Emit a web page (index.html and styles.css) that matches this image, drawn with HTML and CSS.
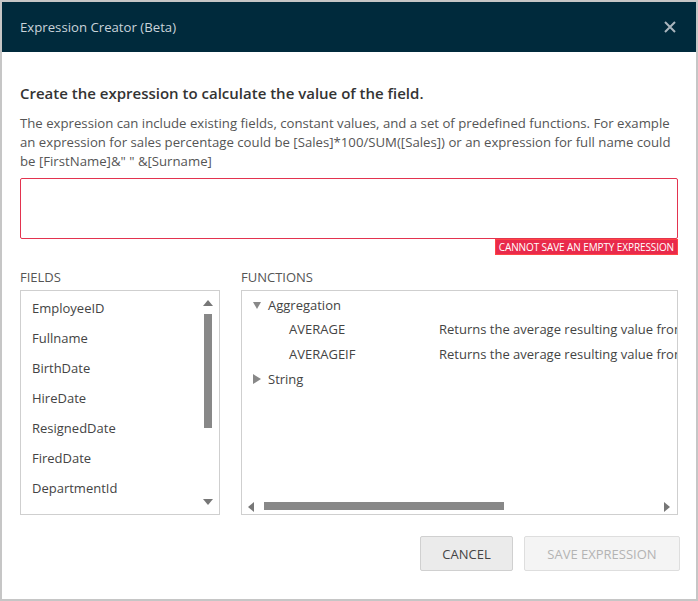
FILE: index.html
```html
<!DOCTYPE html>
<html>
<head>
<meta charset="utf-8">
<link rel="stylesheet" href="styles.css">
</head>
<body>
<div class="dialog">
  <div class="header">
    <span class="title">Expression Creator (Beta)</span>
    <svg class="close" width="12" height="12" viewBox="0 0 12 12"><path d="M1 1L11 11M11 1L1 11" stroke="#a9b5bd" stroke-width="2"/></svg>
  </div>
  <div class="body">
    <h2 class="heading">Create the expression to calculate the value of the field.</h2>
    <p class="desc">The expression can include existing fields, constant values, and a set of predefined functions. For example an expression for sales percentage could be [Sales]*100/SUM([Sales]) or an expression for full name could be [FirstName]&amp;" " &amp;[Surname]</p>
    <div class="expr-wrap">
      <div class="expr"></div>
      <div class="error-row"><span class="error">CANNOT SAVE AN EMPTY EXPRESSION</span></div>
    </div>
    <div class="panels">
      <div class="fields-col">
        <div class="label">FIELDS</div>
        <div class="box fields-box">
          <ul class="field-list">
            <li>EmployeeID</li>
            <li>Fullname</li>
            <li>BirthDate</li>
            <li>HireDate</li>
            <li>ResignedDate</li>
            <li>FiredDate</li>
            <li>DepartmentId</li>
            <li>DepartmentName</li>
          </ul>
          <div class="vscroll">
            <span class="arr up"></span>
            <span class="vtrack"><span class="vthumb"></span></span>
            <span class="arr down"></span>
          </div>
        </div>
      </div>
      <div class="func-col">
        <div class="label">FUNCTIONS</div>
        <div class="box func-box">
          <div class="tree">
            <div class="node"><span class="tri open"></span>Aggregation</div>
            <div class="fn"><span class="fn-name">AVERAGE</span><span class="fn-desc">Returns the average resulting value from the expression</span></div>
            <div class="fn"><span class="fn-name">AVERAGEIF</span><span class="fn-desc">Returns the average resulting value from the expression</span></div>
            <div class="node"><span class="tri closed"></span>String</div>
          </div>
          <div class="hscroll">
            <span class="arr left"></span>
            <span class="htrack"><span class="hthumb"></span></span>
            <span class="arr right"></span>
          </div>
        </div>
      </div>
    </div>
    <div class="actions">
      <button class="btn cancel">CANCEL</button>
      <button class="btn save" disabled>SAVE EXPRESSION</button>
    </div>
  </div>
</div>
</body>
</html>
```

FILE: styles.css
```css
* { box-sizing: border-box; }
html, body { margin: 0; padding: 0; }
body {
  font-family: "Open Sans", "Noto Sans", sans-serif;
  background: #fff;
}
.dialog {
  width: 698px;
  height: 601px;
  border: 2px solid #c6c6c6;
  display: flex;
  flex-direction: column;
  background: #fff;
  overflow: hidden;
}
.header {
  height: 50px;
  background: #002a3c;
  display: flex;
  align-items: center;
  justify-content: space-between;
  padding: 0 20px 0 18px;
  flex: none;
}
.title {
  color: #c9d3da;
  font-size: 13.2px;
}
.close { display: block; }
.body {
  padding: 30px 18px 0 18px;
  display: flex;
  flex-direction: column;
  flex: 1;
  min-width: 0;
}
.heading {
  margin: 0;
  font-size: 15px;
  font-weight: 600;
  color: #333;
  line-height: 22px;
}
.desc {
  margin: 10px 0 0 0;
  font-size: 13.2px;
  line-height: 19px;
  color: #555;
}
.expr-wrap { margin-top: 7px; }
.expr {
  height: 61px;
  border: 1px solid #e3334f;
  border-radius: 2px;
}
.error-row { display: flex; justify-content: flex-end; }
.error {
  background: #e92a4b;
  color: #fff;
  font-size: 10px;
  line-height: 14px;
  padding: 0 3px;
  border: 1px solid #f44;
  letter-spacing: -0.1px;
}
.panels {
  display: flex;
  gap: 21px;
  margin-top: 13px;
  min-width: 0;
}
.label {
  font-size: 13px;
  color: #555;
  line-height: 18px;
  margin-bottom: 4px;
}
.fields-col { width: 200px; flex: none; }
.func-col { flex: 1; min-width: 0; }
.box {
  border: 1px solid #cfcfcf;
  height: 225px;
  position: relative;
  overflow: hidden;
}
.field-list {
  list-style: none;
  margin: 0;
  padding: 2px 0 0 11px;
}
.field-list li {
  font-size: 13px;
  line-height: 30px;
  color: #444;
}
.vscroll {
  position: absolute;
  top: 5px;
  right: 7px;
  bottom: 5px;
  width: 9px;
  display: flex;
  flex-direction: column;
  align-items: center;
}
.vtrack { flex: 1; width: 9px; position: relative; }
.vthumb {
  position: absolute;
  left: 1px; width: 8px;
  top: 8px; height: 114px;
  background: #888;
}
.arr { width: 0; height: 0; display: block; flex: none; }
.arr.up { border-left: 5px solid transparent; border-right: 5px solid transparent; border-bottom: 6px solid #777; margin-top: 4px; }
.arr.down { border-left: 5px solid transparent; border-right: 5px solid transparent; border-top: 6px solid #777; margin-bottom: 4px; }
.tree { padding: 2px 0 0 11px; }
.node {
  font-size: 13px;
  line-height: 24px;
  color: #444;
  display: flex;
  align-items: center;
}
.tri { width: 0; height: 0; margin-right: 7px; }
.tri.open { border-left: 4px solid transparent; border-right: 4px solid transparent; border-top: 7px solid #888; }
.tri.closed { border-top: 5px solid transparent; border-bottom: 5px solid transparent; border-left: 8px solid #888; }
.fn {
  display: flex;
  font-size: 13px;
  line-height: 25px;
  color: #444;
  white-space: nowrap;
}
.fn-name { width: 150px; flex: none; padding-left: 36px; box-sizing: content-box; }
.hscroll {
  position: absolute;
  left: 5px; right: 5px; bottom: 3px;
  height: 9px;
  display: flex;
  align-items: center;
  background: #fff;
}
.htrack { flex: 1; height: 9px; position: relative; }
.hthumb {
  position: absolute;
  top: 0; height: 8px;
  left: 10px; width: 240px;
  background: #888;
}
.arr.left { border-top: 5px solid transparent; border-bottom: 5px solid transparent; border-right: 6px solid #777; margin-left: 1px; }
.arr.right { border-top: 5px solid transparent; border-bottom: 5px solid transparent; border-left: 6px solid #777; margin-right: 2px; }
.actions {
  display: flex;
  justify-content: flex-end;
  gap: 11px;
  margin-top: 21px;
  margin-right: -2px;
}
.btn {
  font-family: inherit;
  font-size: 13px;
  height: 35px;
  border: 1px solid #d0d0d0;
  border-radius: 2px;
  padding: 0;
}
.cancel { width: 93px; background: #ebebeb; color: #444; }
.save { width: 156px; background: #f4f4f4; color: #b3b3b3; border-color: #dedede; }
```
